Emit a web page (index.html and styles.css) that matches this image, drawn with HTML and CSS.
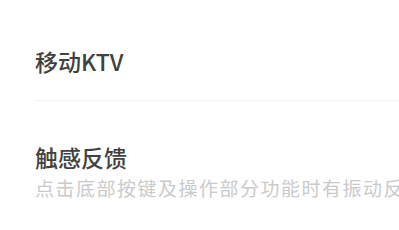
FILE: index.html
```html
<!DOCTYPE html>
<html lang="zh-CN">
<head>
    <meta charset="UTF-8">
    <meta name="viewport" content="width=device-width, initial-scale=1.0">
    <title>设置</title>
    <link rel="stylesheet" href="styles.css">
</head>
<body>
    <div class="settings">
        <div class="item first">
            <div class="title">移动KTV</div>
        </div>
        <div class="item second">
            <div class="title">触感反馈</div>
            <div class="desc">点击底部按键及操作部分功能时有振动反馈</div>
        </div>
    </div>
</body>
</html>
```

FILE: styles.css
```css
body {
    margin: 0;
    background: #ffffff;
    font-family: "Noto Sans CJK SC", "Noto Sans", sans-serif;
    overflow: hidden;
}
.settings {
    padding-left: 35px;
}
.item.first {
    padding: 48px 0 26px;
    border-bottom: 1px solid #f3f3f3;
}
.item.second {
    padding-top: 43px;
}
.title {
    font-size: 23px;
    line-height: 26px;
    font-weight: 500;
    color: #414141;
}
.desc {
    margin-top: 7px;
    font-size: 19px;
    line-height: 22px;
    letter-spacing: 1.5px;
    color: #cacaca;
    white-space: nowrap;
    overflow: hidden;
}
```
